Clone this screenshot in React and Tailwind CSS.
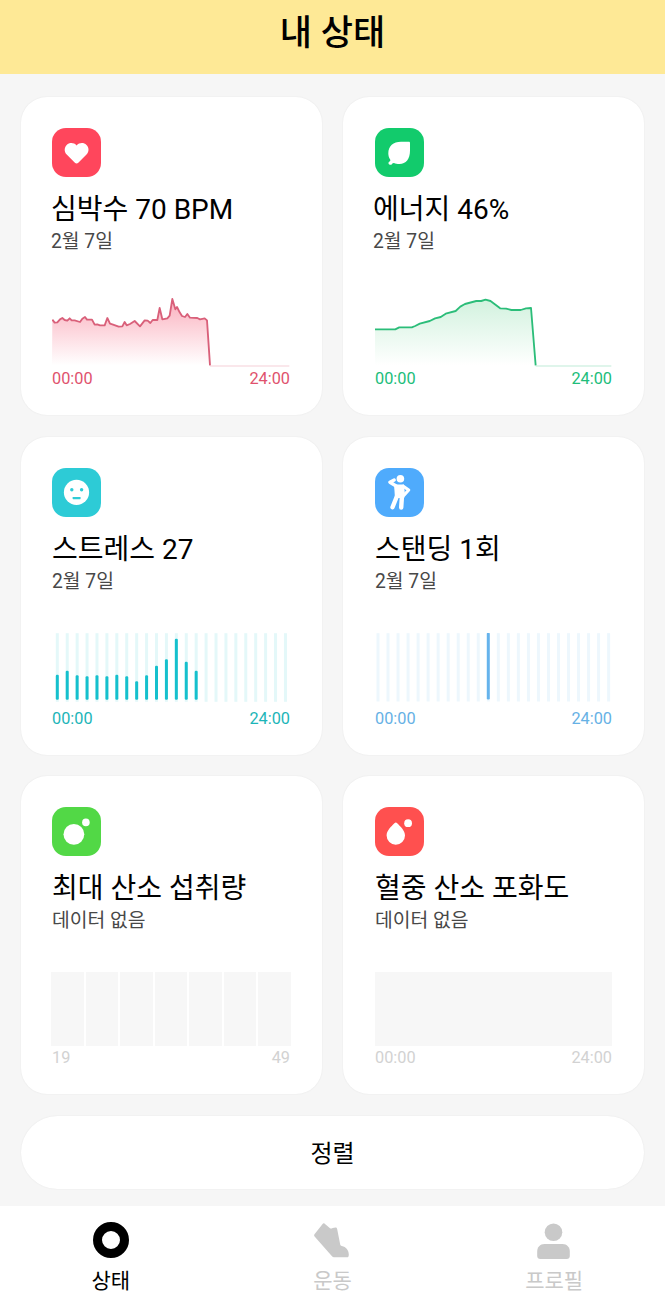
import clsx from "clsx";

const HEART_POINTS =
  "1,80 8,89 16,88 24,79 31,75 38,81 46,83 53,76 59,82 68,82 84,87 91,77 99,72 105,80 120,80 128,95 136,94 144,97 158,97 166,75 174,92 181,94 200,101 211,100 218,87 224,97 234,93 248,84 264,100 278,82 287,83 295,90 302,81 316,81 323,45 331,79 346,76 353,68 361,18 370,49 375,42 383,58 390,69 399,72 406,63 414,74 436,75 444,79 458,76 465,82 474,217";

const ENERGY_POINTS =
  "0,109 61,109 73,103 111,103 121,99 135,92 165,84 181,76 198,72 213,62 243,54 257,41 271,33 305,24 320,24 333,20 348,24 363,35 377,46 395,47 411,51 439,51 455,46 470,45 484,217";

const STRESS_BARS = [25, 29, 24.5, 23.5, 24.5, 23.5, 25, 23.5, 18.5, 24.5, 34, 40.5, 61, 38, 29];
const STANDING_BARS = [0, 0, 0, 0, 0, 0, 0, 0, 0, 0, 0, 67];

function AreaChart({ id, points, color, fill, end, opacity }) {
  return (
    <svg className="block h-[74px] w-full" viewBox="0 0 714 222" preserveAspectRatio="none">
      <defs>
        <linearGradient id={id} x1="0" y1="0" x2="0" y2="1">
          <stop offset="0" stopColor={fill} stopOpacity={opacity} />
          <stop offset="1" stopColor={fill} stopOpacity="0" />
        </linearGradient>
      </defs>
      <polygon points={`0,217 ${points}`} fill={`url(#${id})`} />
      <path d={`M${end} 219H712`} stroke={color} strokeOpacity="0.3" strokeWidth="3" />
      <polyline points={points} fill="none" stroke={color} strokeWidth="5.5" strokeLinejoin="round" />
    </svg>
  );
}

function BarChart({ bars, start, step, color, track }) {
  return (
    <svg className="block h-[74px] w-full" viewBox="0 0 238 74" preserveAspectRatio="xMinYMin">
      {Array(24)
        .fill(0)
        .map((_, i) => {
          const x = start + i * step - 1.5;
          return (
            <g key={i}>
              <rect x={x} y="0.2" width="3" height="68.6" fill={track} />
              {bars[i] > 0 && (
                <rect x={x} y={66.7 - bars[i]} width="3" height={bars[i]} rx="1.2" fill={color} />
              )}
            </g>
          );
        })}
    </svg>
  );
}

function Glyph({ children }) {
  return (
    <svg className="size-[49px]" viewBox="0 0 49 49" fill="#fff">
      {children}
    </svg>
  );
}

const cards = [
  {
    title: "심박수 70 BPM",
    note: "2월 7일",
    shift: "-ml-px",
    tile: "bg-[#ff465c]",
    label: "text-[#e0526d]",
    range: ["00:00", "24:00"],
    icon: (
      <path d="M24.6 35.6c-.7 0-1.2-.3-1.7-.8l-8.2-8.2c-2.7-2.8-2.6-7.1 0-9.7 2.8-2.7 7.2-2.5 9.900.5 2.700-3 7.100-3.200 9.900-.5 2.700 2.600 2.700 6.900 0 9.700l-8.200 8.200c-.5.5-1 .8-1.700.8z" />
    ),
    chart: (
      <AreaChart id="heart-fill" points={HEART_POINTS} color="#d9607a" fill="#f77089" end={474} opacity="0.55" />
    ),
  },
  {
    title: "에너지 46%",
    note: "2월 7일",
    shift: "-ml-0.5",
    tile: "bg-[#12cb6c]",
    label: "text-[#20bd7a]",
    range: ["00:00", "24:00"],
    icon: (
      <path d="M33.8 13.8C34.600 13.800 35 14.200 35 15V22.500C35 31 31 36 24.500 36C22.300 36 20.500 35.600 19 34.900L17.600 35.200C17 36.400 16 37 14.800 36.700C13.400 36.300 13 34.700 14.100 33.800L15.300 32.900L15.200 31.600C14 29.800 13.300 27.600 13.300 25.200C13.300 18.200 18.300 13.800 26 13.800Z" />
    ),
    chart: (
      <AreaChart id="energy-fill" points={ENERGY_POINTS} color="#2bbd79" fill="#43c878" end={484} opacity="0.24" />
    ),
  },
  {
    title: "스트레스 27",
    note: "2월 7일",
    tile: "bg-[#2dcbd6]",
    label: "text-[#1cb5b8]",
    range: ["00:00", "24:00"],
    icon: (
      <>
        <circle cx="24.5" cy="24.4" r="12.6" />
        <g fill="#2dcbd6">
          <circle cx="19.8" cy="21.8" r="1.7" />
          <circle cx="29.6" cy="21.8" r="1.7" />
          <rect x="20.6" y="29" width="8" height="2.2" rx="0.6" />
        </g>
      </>
    ),
    chart: <BarChart bars={STRESS_BARS} start={5.3} step={9.92} color="#15c0cd" track="#e4f8f9" />,
  },
  {
    title: "스탠딩 1회",
    note: "2월 7일",
    tile: "bg-[#4fabfc]",
    label: "text-[#66b1e5]",
    range: ["00:00", "24:00"],
    icon: (
      <>
        <circle cx="25.4" cy="10.8" r="3.800" />
        <path d="M19 16.500h10l1 10.500-.8 3h-9.200z" />
        <g fill="none" stroke="#fff" strokeLinecap="round" strokeLinejoin="round">
          <path d="M21.500 18.200l-6.600-4 4.300-2.200" strokeWidth="3.4" />
          <path d="M28.300 18.300l5.400 3.700-4.500 5" strokeWidth="3.2" />
          <path d="M22.200 27.500l-4.700 11.700M27 27.500l-.8 12" strokeWidth="4.4" />
        </g>
      </>
    ),
    chart: <BarChart bars={STANDING_BARS} start={3} step={10.07} color="#66b3ec" track="#edf7fd" />,
  },
  {
    title: "최대 산소 섭취량",
    note: "데이터 없음",
    tile: "bg-[#52d846]",
    label: "text-[#d2d2d2]",
    range: ["19", "49"],
    icon: (
      <>
        <circle cx="21.9" cy="27.3" r="10.4" />
        <circle cx="33.9" cy="15.4" r="3.8" />
      </>
    ),
    chart: (
      <div className="-mx-px grid h-[74px] grid-cols-7 gap-0.5">
        {Array(7)
          .fill(0)
          .map((_, i) => (
            <div key={i} className="bg-[#f7f7f7]" />
          ))}
      </div>
    ),
  },
  {
    title: "혈중 산소 포화도",
    note: "데이터 없음",
    tile: "bg-[#ff504f]",
    label: "text-[#d2d2d2]",
    range: ["00:00", "24:00"],
    icon: (
      <>
        <path d="M19.400 16.300C20.200 15.300 21.400 15.300 22.200 16.300C25.500 19.800 30 23.600 30 28.600A9.200 9.200 0 0 1 11.600 28.600C11.600 23.600 16.100 19.800 19.400 16.300Z" />
        <circle cx="33.1" cy="16.2" r="3.9" />
      </>
    ),
    chart: <div className="h-[74px] bg-[#f7f7f7]" />,
  },
];

function StatusCard({ card, right }) {
  return (
    <section
      className={clsx(
        "h-[318px] rounded-[26px] bg-white pt-[31px] shadow-[0_0_2px_rgba(0,0,0,0.07)]",
        right ? "pr-8 pl-8" : "pr-8 pl-[31px]"
      )}
    >
      <div className={clsx("size-[49px] overflow-hidden rounded-[14px]", card.tile)}>
        <Glyph>{card.icon}</Glyph>
      </div>
      <div className={card.shift}>
        <h2 className="mt-[15px] text-[28px] leading-9 whitespace-nowrap text-black">{card.title}</h2>
        <p className="h-7 text-[19.3px] leading-7 text-[#484848]">{card.note}</p>
      </div>
      <div className="mt-[37px]">{card.chart}</div>
      <div className={clsx("flex justify-between text-[16.3px] leading-[23px]", card.label)}>
        <span>{card.range[0]}</span>
        <span>{card.range[1]}</span>
      </div>
    </section>
  );
}

const tabs = [
  {
    name: "상태",
    active: true,
    icon: <circle cx="18" cy="18" r="13.5" fill="none" stroke="currentColor" strokeWidth="9" />,
  },
  {
    name: "운동",
    icon: (
      <path d="M8.600 1.900C9.200 1.100 10 1.100 10.700 1.700L16 6.200C16.900 6.900 17.600 6.500 18.700 6L21.500 5.600C22.600 5.600 23 6.200 23.200 7.300L26.200 22.500C26.400 23.500 26.800 23.700 27.800 23.900C32 24.800 34.800 28 34.800 32.500C34.800 34.600 34.300 35.300 32.800 35.300H20.500C19.400 35.300 18.700 35 18 34.200L.6 14.500C0 13.700 0 13 .5 12.200Z" />
    ),
  },
  {
    name: "프로필",
    icon: (
      <>
        <circle cx="17.500" cy="10.300" r="8.800" />
        <path d="M8.500 22h18c4.500 0 7.300 3.200 7.300 7.700v4.300c0 1.700-1.300 3-3 3h-26.600c-1.700 0-3-1.300-3-3v-4.300c0-4.500 2.800-7.700 7.300-7.700z" />
      </>
    ),
  },
];

export default function App() {
  return (
    <div className="flex h-[1307px] w-[665px] flex-col overflow-hidden bg-[#f6f6f6] font-['Roboto','Noto_Sans_CJK_KR',sans-serif]">
      <header className="h-[74px] shrink-0 bg-[#fee996] text-center">
        <h1 className="pt-1.5 text-[35px] leading-[56px] font-medium text-black">내 상태</h1>
      </header>

      <main className="h-[1132px] shrink-0 px-[21px] pt-[23px]">
        <div className="grid grid-cols-2 gap-x-[21px] gap-y-[21.5px]">
          {cards.map((card, i) => (
            <StatusCard key={card.title} card={card} right={i % 2 === 1} />
          ))}
        </div>
        <button className="mt-[22px] block h-[73px] w-full rounded-full bg-white pt-0.5 text-2xl text-black shadow-[0_0_2px_rgba(0,0,0,0.07)]">
          정렬
        </button>
      </main>

      <nav className="grid flex-1 grid-cols-3 bg-white pt-4">
        {tabs.map((tab) => (
          <a
            key={tab.name}
            className={clsx("flex flex-col items-center", tab.active ? "text-black" : "text-[#c9c9c9]")}
          >
            <svg className="h-[38px] w-9" viewBox="0 0 36 38" fill="currentColor">
              {tab.icon}
            </svg>
            <span className="mt-[7px] text-[21px] leading-7">{tab.name}</span>
          </a>
        ))}
      </nav>
    </div>
  );
}
